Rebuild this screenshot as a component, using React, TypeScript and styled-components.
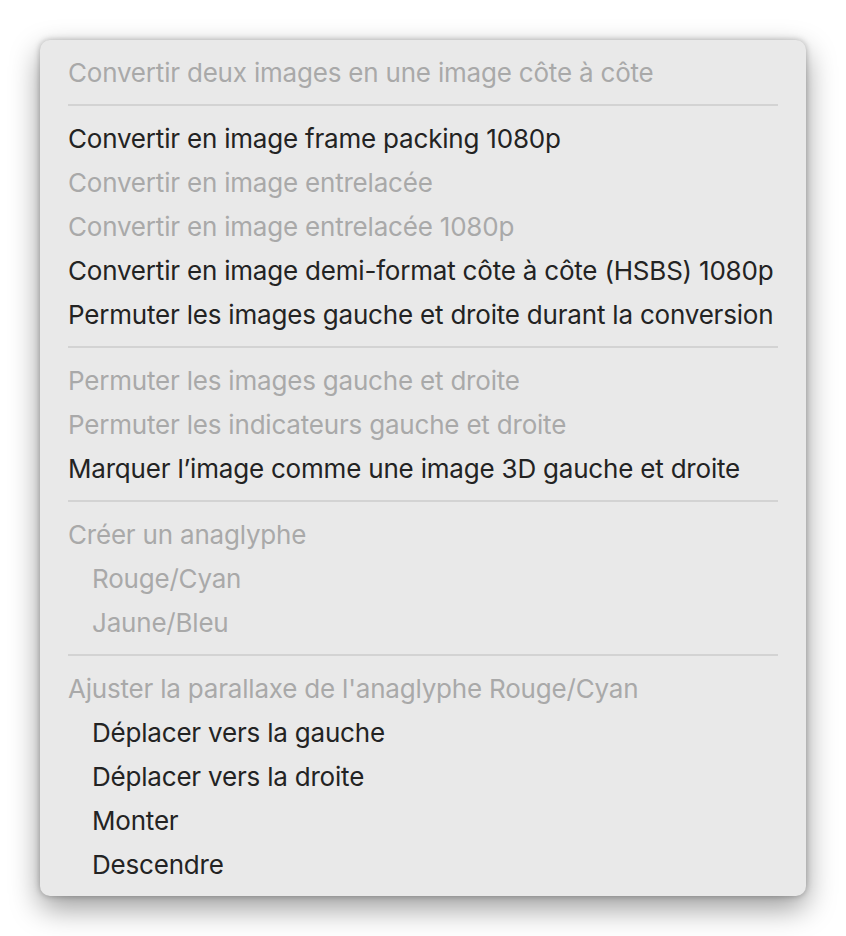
import React from "react";
import styled, { createGlobalStyle } from "styled-components";

const Global = createGlobalStyle`
  html, body { margin: 0; padding: 0; background: #ffffff; }
  body { font-family: Inter, "Noto Sans", sans-serif; }
`;

const Page = styled.div`
  padding: 40px;
  width: 846px;
  height: 936px;
  box-sizing: border-box;
`;

const Menu = styled.div`
  width: 766px;
  box-sizing: border-box;
  background: #e9e9e9;
  border-radius: 10px;
  padding: 10px 28px 10px 28px;
  box-shadow: 0 12px 30px rgba(0, 0, 0, 0.4), 0 0 6px rgba(0, 0, 0, 0.28);
  display: flex;
  flex-direction: column;
`;

const Item = styled.div<{ $disabled?: boolean; $indent?: boolean }>`
  height: 44px;
  display: flex;
  align-items: center;
  padding-left: ${(p) => (p.$indent ? "24px" : "0")};
  font-family: Inter, "Noto Sans", sans-serif;
  font-size: 26px;
  letter-spacing: -0.2px;
  color: ${(p) => (p.$disabled ? "#a9a9a9" : "#232323")};
  white-space: nowrap;
`;

const Separator = styled.div`
  height: 22px;
  display: flex;
  align-items: center;
  &::after {
    content: "";
    flex: 1;
    height: 2px;
    background: #d3d3d3;
  }
`;

type Entry =
  | { sep: true }
  | { label: string; disabled?: boolean; indent?: boolean };

const entries: Entry[] = [
  { label: "Convertir deux images en une image côte à côte", disabled: true },
  { sep: true },
  { label: "Convertir en image frame packing 1080p" },
  { label: "Convertir en image entrelacée", disabled: true },
  { label: "Convertir en image entrelacée 1080p", disabled: true },
  { label: "Convertir en image demi-format côte à côte (HSBS) 1080p" },
  { label: "Permuter les images gauche et droite durant la conversion" },
  { sep: true },
  { label: "Permuter les images gauche et droite", disabled: true },
  { label: "Permuter les indicateurs gauche et droite", disabled: true },
  { label: "Marquer l’image comme une image 3D gauche et droite" },
  { sep: true },
  { label: "Créer un anaglyphe", disabled: true },
  { label: "Rouge/Cyan", disabled: true, indent: true },
  { label: "Jaune/Bleu", disabled: true, indent: true },
  { sep: true },
  { label: "Ajuster la parallaxe de l'anaglyphe Rouge/Cyan", disabled: true },
  { label: "Déplacer vers la gauche", indent: true },
  { label: "Déplacer vers la droite", indent: true },
  { label: "Monter", indent: true },
  { label: "Descendre", indent: true },
];

export default function App() {
  return (
    <>
      <Global />
      <Page>
        <Menu>
          {entries.map((e, i) =>
            "sep" in e ? (
              <Separator key={i} />
            ) : (
              <Item key={i} $disabled={e.disabled} $indent={e.indent}>
                {e.label}
              </Item>
            )
          )}
        </Menu>
      </Page>
    </>
  );
}
